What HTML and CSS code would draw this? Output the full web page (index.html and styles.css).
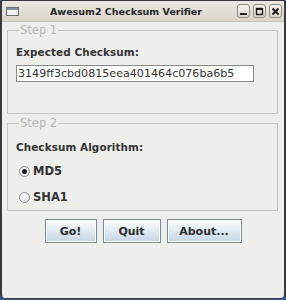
FILE: index.html
```html
<!DOCTYPE html>
<html>
<head>
<meta charset="utf-8">
<link rel="stylesheet" href="styles.css">
</head>
<body>
<div class="window">
  <div class="titlebar">
    <span class="app-icon"><span class="app-icon-bar"></span></span>
    <span class="title">Awesum2 Checksum Verifier</span>
    <span class="wm-buttons">
      <span class="wm-btn"><svg width="9" height="9" viewBox="0 0 9 9"><rect x="1" y="6" width="7" height="2" fill="#1a1a1a"/></svg></span>
      <span class="wm-btn"><svg width="9" height="9" viewBox="0 0 9 9"><rect x="1.5" y="1.5" width="6" height="6" fill="none" stroke="#1a1a1a" stroke-width="1.4"/><rect x="1" y="1" width="7" height="2" fill="#1a1a1a"/></svg></span>
      <span class="wm-btn"><svg width="9" height="9" viewBox="0 0 9 9"><path d="M1.5 1.5 L7.5 7.5 M7.5 1.5 L1.5 7.5" stroke="#1a1a1a" stroke-width="2"/></svg></span>
    </span>
  </div>
  <div class="content">
    <fieldset class="group step1">
      <legend>Step 1</legend>
      <div class="label">Expected Checksum:</div>
      <div class="field">3149ff3cbd0815eea401464c076ba6b5</div>
    </fieldset>
    <fieldset class="group step2">
      <legend>Step 2</legend>
      <div class="label">Checksum Algorithm:</div>
      <div class="radio-row"><span class="radio checked"></span><span class="radio-label">MD5</span></div>
      <div class="radio-row"><span class="radio"></span><span class="radio-label">SHA1</span></div>
    </fieldset>
    <div class="buttons">
      <span class="btn btn-go">Go!</span>
      <span class="btn btn-quit">Quit</span>
      <span class="btn btn-about">About...</span>
    </div>
  </div>
</div>
</body>
</html>
```
FILE: styles.css
```css
html, body {
  margin: 0;
  padding: 0;
  background: #2f5f9c;
}
body {
  width: 286px;
  height: 300px;
  overflow: hidden;
  font-family: "DejaVu Sans", sans-serif;
}
.window {
  box-sizing: border-box;
  width: 286px;
  height: 299px;
  border: 1px solid #3a3a3a;
  border-left-width: 2px;
  border-right-width: 2px;
  border-radius: 3px 3px 5px 5px;
  background: #eeeeec;
  display: flex;
  flex-direction: column;
  overflow: hidden;
}
.titlebar {
  height: 20px;
  flex: none;
  display: flex;
  align-items: center;
  background: linear-gradient(#ebe8e3, #d9d5cd);
  border-bottom: 1px solid #c6c2ba;
}
.app-icon {
  width: 13px;
  height: 9px;
  margin-left: 4px;
  border: 1px solid #6f6f6f;
  background: #f4f4f4;
  box-sizing: border-box;
  display: flex;
  flex-direction: column;
}
.app-icon-bar {
  height: 2px;
  background: #8a8fa8;
}
.title {
  flex: 1;
  text-align: center;
  font-weight: bold;
  font-size: 9.5px;
  color: #262626;
  margin-right: 4px;
}
.wm-buttons {
  display: flex;
  gap: 3px;
  margin-right: 2px;
}
.wm-btn {
  width: 13px;
  height: 14px;
  box-sizing: border-box;
  border: 1px solid #8e8a84;
  border-radius: 3px;
  background: linear-gradient(#f4f2ef, #dcd8d1);
  display: flex;
  align-items: center;
  justify-content: center;
}
.content {
  flex: 1;
  padding: 1px 6px 0 5px;
}
.group {
  margin: 0;
  border: 1px solid #c4c4c4;
  padding: 0 0 0 8px;
  min-width: 0;
  box-sizing: border-box;
}
.group legend {
  padding: 0 1px;
  margin-left: 3px;
  font-size: 11.5px;
  line-height: 14px;
  color: #b9b9b9;
}
.step1 {
  height: 91px;
}
.step2 {
  margin-top: 2px;
  height: 95px;
}
.label {
  font-weight: bold;
  font-size: 10.4px;
  line-height: 14px;
  color: #333;
  letter-spacing: 0.1px;
}
.step1 .label {
  margin-top: 8px;
}
.field {
  margin-top: 6px;
  width: 238px;
  height: 17px;
  box-sizing: border-box;
  border: 1px solid #8a8a8a;
  background: #fff;
  font-size: 11.1px;
  line-height: 15px;
  padding-left: 1px;
  color: #333;
  white-space: nowrap;
}
.step2 .label {
  margin-top: 10px;
}
.radio-row {
  display: flex;
  align-items: center;
  height: 26px;
  padding-left: 3px;
}
.label + .radio-row {
  margin-top: 4px;
}
.radio {
  width: 11px;
  height: 11px;
  box-sizing: border-box;
  border-radius: 50%;
  border: 1px solid #8f8f8f;
  background: radial-gradient(circle at 40% 35%, #ffffff, #d7dbe3);
  display: flex;
  align-items: center;
  justify-content: center;
}
.radio.checked::after {
  content: "";
  width: 5px;
  height: 5px;
  border-radius: 50%;
  background: #1b1b1b;
}
.radio-label {
  margin-left: 3px;
  font-weight: bold;
  font-size: 11.5px;
  color: #333;
}
.buttons {
  display: flex;
  justify-content: center;
  gap: 6px;
  margin-top: 8px;
  padding-left: 1px;
}
.btn {
  height: 24px;
  box-sizing: border-box;
  border: 1px solid #7b8a9a;
  background: linear-gradient(#fbfcfd, #dde7f2 55%, #c3d4e6);
  box-shadow: inset 0 0 0 1px #ffffff;
  display: flex;
  align-items: center;
  justify-content: center;
  font-weight: bold;
  font-size: 11px;
  color: #2a2a2a;
}
.btn-go { width: 52px; }
.btn-quit { width: 58px; }
.btn-about { width: 75px; }
```
